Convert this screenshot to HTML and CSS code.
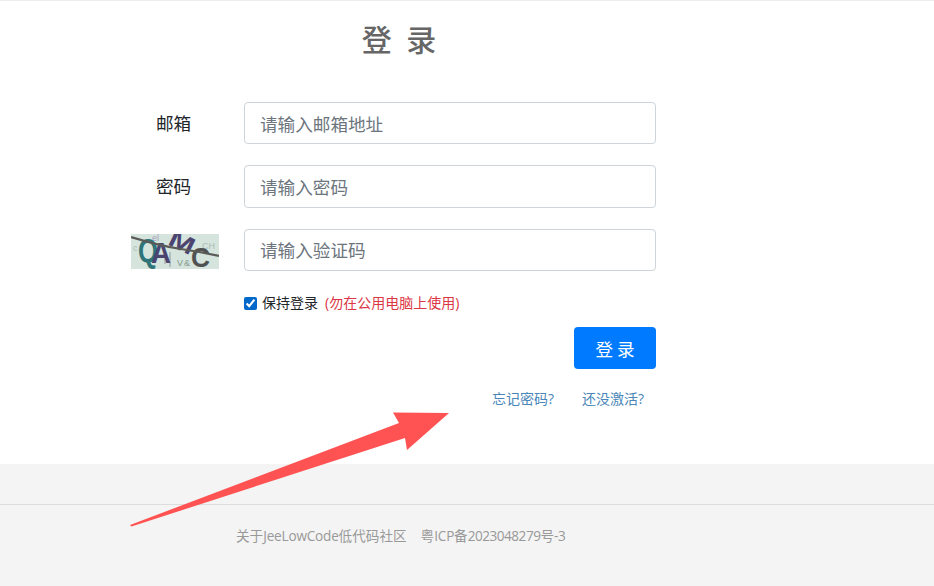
FILE: index.html
```html
<!DOCTYPE html>
<html lang="zh-CN">
<head>
<meta charset="utf-8">
<title>登录</title>
<link rel="stylesheet" href="styles.css">
</head>
<body>
<main class="login">
  <h1 class="title">登 录</h1>
  <form class="form">
    <label class="label">邮箱</label>
    <input class="input" type="text" placeholder="请输入邮箱地址">
    <label class="label">密码</label>
    <input class="input" type="password" placeholder="请输入密码">
    <svg class="captcha" width="88" height="35" viewBox="0 0 88 35">
      <rect width="88" height="35" fill="#d5e4dd"/>
      <g font-family="Liberation Sans, sans-serif" font-size="9" fill="#a9bdb5">
        <text x="2" y="17">c</text>
        <text x="21" y="7" fill="#a79fbd">el</text>
        <text x="71" y="15">CH</text>
        <text x="46" y="32" fill="#7f9a90">V</text>
        <text x="53" y="32" fill="#8a9c94">&amp;</text>
      </g>
      <path d="M39 18 V33 M34 23 V30" fill="none" stroke="#8f9aa5" stroke-width="1"/>
      <g font-family="Liberation Sans, sans-serif" font-weight="700">
        <text x="7" y="28" font-size="33" fill="#2e7478" textLength="20" lengthAdjust="spacingAndGlyphs">Q</text>
        <text x="20" y="29" font-size="30" fill="#4b4470" textLength="20" lengthAdjust="spacingAndGlyphs">A</text>
        <text x="38" y="16" font-size="24" fill="#4b4470" textLength="26" lengthAdjust="spacingAndGlyphs" transform="rotate(26 50 8)">M</text>
        <text x="60" y="33" font-size="27" fill="#505251" textLength="19" lengthAdjust="spacingAndGlyphs">C</text>
      </g>
      <path d="M0 3 Q30 12 50 15 T88 22" fill="none" stroke="#5a5a58" stroke-width="2.2"/>
    </svg>
    <input class="input" type="text" placeholder="请输入验证码">
    <label class="remember">
      <input class="check" type="checkbox" checked>
      <span>保持登录</span>
      <span class="warn">(勿在公用电脑上使用)</span>
    </label>
    <button class="submit" type="button">登 录</button>
    <nav class="links">
      <a href="#">忘记密码?</a>
      <a href="#">还没激活?</a>
    </nav>
  </form>
</main>
<footer class="footer">
  <div class="footer-inner">
    <a href="#">关于<span class="latin">JeeLowCode</span>低代码社区</a>
    <a href="#">粤<span class="latin">ICP</span>备<span class="digits">2023048279</span>号<span class="digits">-3</span></a>
  </div>
</footer>
<svg class="arrow" width="330" height="125" viewBox="0 0 330 125">
  <path d="M0 123 L269 21 L263 10.500 L319 11 L277 48 L275 36 L1.500 124.500 Z" fill="#ff5353"/>
</svg>
</body>
</html>
```

FILE: styles.css
```css
* { box-sizing: border-box; }
html, body { margin: 0; height: 100%; }
body {
  position: relative;
  width: 934px;
  height: 586px;
  overflow: hidden;
  background: #fff;
  font-family: "Open Sans", "Noto Sans CJK SC", sans-serif;
  color: #212529;
}
.login {
  height: 464px;
  border-top: 1px solid #eee;
}
.title {
  margin: 15px 0 0;
  width: 802px;
  text-align: center;
  font-size: 30px;
  line-height: 44px;
  font-weight: 500;
  letter-spacing: 4px;
  color: #666;
  font-family: "Noto Sans CJK SC", sans-serif;
}
.form {
  margin: 42px 0 0 131px;
  width: 525px;
  display: grid;
  grid-template-columns: 88px 412px;
  column-gap: 25px;
  row-gap: 21px;
  align-items: center;
}
.label {
  padding-right: 3px;
  text-align: center;
  font-size: 17.6px;
  line-height: 42px;
  font-family: "Noto Sans CJK SC", sans-serif;
}
.input {
  height: 42.3px;
  width: 412px;
  padding: 0 15px;
  border: 1px solid #ced4da;
  border-radius: 4px;
  font-size: 17.6px;
  font-family: "Noto Sans CJK SC", sans-serif;
  outline: none;
}
.input::placeholder { color: #6c757d; opacity: 1; }
.captcha { display: block; margin-top: 3px; }
.remember {
  grid-column: 2;
  display: flex;
  align-items: center;
  gap: 5px;
  margin-top: 1.4px;
  font-size: 14px;
  line-height: 20px;
}
.check {
  margin: 0;
  width: 13px;
  height: 13px;
  accent-color: #0069c9;
}
.warn { color: #dc3545; margin-left: 2px; }
.submit {
  grid-column: 2;
  justify-self: end;
  width: 82px;
  height: 42px;
  margin-top: -7px;
  border: 0;
  border-radius: 4px;
  background: #007bff;
  color: #fff;
  font-size: 17.6px;
  font-family: "Noto Sans CJK SC", sans-serif;
}
.links {
  grid-column: 2;
  justify-self: end;
  display: flex;
  gap: 28px;
  padding-right: 12px;
  margin-top: -1px;
  font-size: 14px;
  line-height: 20px;
}
.links a { color: #4a86b8; text-decoration: none; }
.footer {
  height: 122px;
  background: #f4f4f4;
  padding-top: 40px;
}
.footer-inner {
  border-top: 1px solid #ddd;
  padding: 21px 0 0 236px;
  display: flex;
  gap: 14px;
  font-size: 13.6px;
  line-height: 20px;
}
.footer-inner a { color: #999; text-decoration: none; }
.latin { letter-spacing: -0.2px; }
.digits { letter-spacing: -0.5px; }
.arrow {
  position: absolute;
  left: 130px;
  top: 402px;
}
```
